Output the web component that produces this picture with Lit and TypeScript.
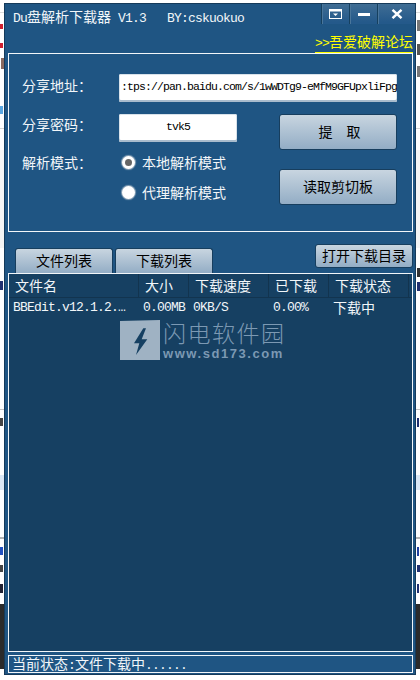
import { customElement } from 'lit/decorators.js';
import { css, html, LitElement } from 'lit';

// bits of the web page that peek out on either side of the window
const slivers = [
  { x: 0, y: 24, w: 3, h: 5, c: '#d02030' },
  { x: 0, y: 43, w: 3, h: 5, c: '#d02030' },
  { x: 1, y: 58, w: 3, h: 11, c: '#8a6a60' },
  { x: 0, y: 106, w: 3, h: 8, c: '#5aa6e0' },
  { x: 0, y: 281, w: 3, h: 9, c: '#203070' },
  { x: 0, y: 418, w: 3, h: 8, c: '#444' },
  { x: 0, y: 547, w: 3, h: 8, c: '#2050c0' },
  { x: 0, y: 565, w: 3, h: 7, c: '#444' },
  { x: 0, y: 584, w: 3, h: 9, c: '#223' },
  { x: 417, y: 20, w: 3, h: 11, c: '#777' },
  { x: 417, y: 44, w: 3, h: 11, c: '#555' },
  { x: 417, y: 66, w: 3, h: 11, c: '#777' },
  { x: 417, y: 268, w: 3, h: 9, c: '#333' },
  { x: 417, y: 282, w: 3, h: 9, c: '#203070' },
  { x: 417, y: 418, w: 2, h: 9, c: '#203070' },
  { x: 417, y: 547, w: 2, h: 9, c: '#2040a0' },
  { x: 417, y: 565, w: 3, h: 7, c: '#203070' },
  { x: 417, y: 584, w: 2, h: 9, c: '#203070' },
];

@customElement('app-root')
export class AppRoot extends LitElement {
  static override styles = css`
    :host {
      display: block;
      position: relative;
      width: 420px;
      height: 680px;
      overflow: hidden;
      box-sizing: border-box;
      padding: 3px 0 0 4px;
      font-family: 'Noto Sans CJK SC', 'Liberation Sans', sans-serif;
      font-size: 14px;
      color: #f2f6f9;
      background:
        linear-gradient(#fff 0 604px, #2b2b2b 604px 669px, #fff 669px),
        #fff;
    }
    * {
      box-sizing: border-box;
    }
    .band {
      position: absolute;
      left: 0;
      width: 420px;
    }
    .b1 { top: 12px; height: 1px; background: #dcdcdc; }
    .b2 { top: 128px; height: 1px; background: #d4d4d4; }
    .b3 { top: 150px; height: 98px; background: #f4f4f4; }
    .b4 { top: 409px; height: 1px; background: #c4c4c4; }
    .b5 { top: 475px; height: 15px; background: #dbe8f6; }
    .b6 { top: 537px; height: 2px; background: #b4b4b4; }
    .sliver {
      position: absolute;
    }
    .window {
      position: relative;
      width: 412px;
      height: 672px;
      display: flex;
      flex-direction: column;
      padding: 0 2px 1px 3px;
      background: #1f5583;
      border: 1px solid #153a5a;
    }
    .mono {
      font-family: 'Liberation Mono', monospace;
      font-size: 13px;
      letter-spacing: -0.8px;
    }
    .titlebar {
      flex: none;
      height: 27px;
      display: flex;
      justify-content: space-between;
      align-items: flex-start;
      margin-right: -2px;
    }
    .title {
      padding: 3px 0 0 5px;
      line-height: 18px;
      white-space: pre;
    }
    .controls {
      display: flex;
      height: 20px;
    }
    .controls div {
      display: flex;
      align-items: center;
      justify-content: center;
      width: 28px;
      border-left: 1px solid #16405f;
      box-shadow: inset 1px 0 0 #4a769b;
      background: linear-gradient(#3f6d94, #24598a 90%);
    }
    .controls div:last-child {
      width: 38px;
    }
    .link-row {
      flex: none;
      height: 22px;
      display: flex;
      justify-content: flex-end;
      align-items: flex-start;
      padding-top: 2px;
    }
    .link {
      color: #ffff00;
      line-height: 17px;
      border-bottom: 1px solid #ffff00;
      white-space: pre;
    }
    .panel {
      flex: none;
      height: 179px;
      border: 1px solid #f2f6f9;
      padding: 20px 15px 0 13px;
    }
    .row {
      display: flex;
      align-items: flex-start;
    }
    .label {
      width: 97px;
      line-height: 22px;
      flex: none;
    }
    .field {
      height: 28px;
      background: #fff;
      border-radius: 2px;
      box-shadow: inset 0 -2px 0 #a9bccd, inset 0 0 0 1px #d8e2ea;
      color: #000;
      font-family: 'Liberation Mono', monospace;
      font-size: 11.5px;
      letter-spacing: -0.9px;
      line-height: 26px;
      white-space: pre;
    }
    .address {
      flex: 1;
      padding-left: 2px;
      overflow: hidden;
    }
    .secret {
      width: 118px;
      text-align: center;
    }
    .lower {
      display: flex;
      justify-content: space-between;
      margin-top: 12px;
    }
    .lower .label {
      margin-top: -1px;
    }
    .mode {
      margin-top: 5px;
    }
    .mode .label {
      margin-top: 4px;
    }
    .radios {
      display: flex;
      flex-direction: column;
    }
    .radio {
      display: flex;
      align-items: center;
      height: 30px;
      gap: 7px;
      padding-left: 3px;
      line-height: 20px;
    }
    .dot {
      width: 13px;
      height: 13px;
      border-radius: 50%;
      background: #fff;
      box-shadow: 0 0 1px 1px #8fa6ba;
      display: flex;
      align-items: center;
      justify-content: center;
    }
    .dot.on::after {
      content: '';
      width: 7px;
      height: 7px;
      border-radius: 50%;
      background: #666;
    }
    .actions {
      display: flex;
      flex-direction: column;
      gap: 19px;
    }
    .btn {
      display: flex;
      align-items: center;
      justify-content: center;
      padding-bottom: 2px;
      color: #000;
      background: linear-gradient(#c8d5e0, #93adc5);
      border: 1px solid #173e5e;
      border-radius: 3px;
      white-space: pre;
    }
    .actions .btn {
      width: 118px;
      height: 36px;
    }
    .actions .fetch {
      padding-left: 3px;
    }
    .tabs {
      flex: none;
      height: 41px;
      display: flex;
      align-items: flex-end;
      padding-left: 7px;
      gap: 2px;
    }
    .tab {
      width: 98px;
      height: 25px;
      border-bottom: none;
      border-radius: 3px 3px 0 0;
    }
    .open {
      width: 98px;
      height: 24px;
      margin: 0 0 5px auto;
    }
    .list {
      flex: 1;
      position: relative;
      background: #164062;
      border: 1px solid #f2f6f9;
    }
    .head,
    .item {
      display: grid;
      grid-template-columns: 130px 50px 80px 60px 80px;
    }
    .head {
      height: 24px;
      line-height: 22px;
      border-bottom: 1px solid #12344f;
    }
    .head span {
      padding-left: 6px;
      border-right: 1px solid #12344f;
    }
    .item {
      line-height: 20px;
    }
    .item span {
      padding-left: 4px;
      white-space: pre;
      overflow: hidden;
    }
    .item .state {
      line-height: 18px;
    }
    .watermark {
      position: absolute;
      left: 111px;
      top: 46px;
      display: flex;
      gap: 3px;
      color: #7c99b3;
    }
    .brand {
      font-size: 23px;
      line-height: 24px;
      letter-spacing: 1.5px;
      font-weight: 300;
      white-space: nowrap;
    }
    .site {
      font: bold 13px/13px 'Liberation Sans', sans-serif;
      letter-spacing: 1.55px;
      margin-top: 3px;
      white-space: nowrap;
    }
    .status {
      flex: none;
      height: 18px;
      margin-top: 3px;
      padding-left: 3px;
      border: 1px solid #f2f6f9;
      line-height: 15px;
      white-space: pre;
    }
  `;

  override render() {
    return html`
      <div class="band b1"></div>
      <div class="band b2"></div>
      <div class="band b3"></div>
      <div class="band b4"></div>
      <div class="band b5"></div>
      <div class="band b6"></div>
      ${slivers.map(
        (s) =>
          html`<div class="sliver" style="left:${s.x}px;top:${s.y}px;width:${s.w}px;height:${s.h}px;background:${s.c}"></div>`
      )}
      <div class="window">
        <div class="titlebar">
          <div class="title"><span class="mono">Du</span>盘解析下载器<span class="mono"> V1.3   BY:cskuokuo</span></div>
          <div class="controls">
            <div>
              <svg width="13" height="10" viewBox="0 0 13 10">
                <rect x="0.5" y="0.5" width="12" height="9" fill="none" stroke="#fff" />
                <rect x="1" y="1" width="11" height="1.5" fill="#fff" />
                <path d="M4 4.5h5L6.5 7z" fill="#fff" />
              </svg>
            </div>
            <div>
              <svg width="12" height="3" viewBox="0 0 12 3"><rect width="12" height="3" fill="#fff" /></svg>
            </div>
            <div>
              <svg width="12" height="10" viewBox="0 0 12 10">
                <path d="M1.5 .8 10.5 9.2M10.5 .8 1.5 9.2" stroke="#fff" stroke-width="2.4" />
              </svg>
            </div>
          </div>
        </div>
        <div class="link-row"><span class="link"><span class="mono">&gt;&gt;</span>吾爱破解论坛</span></div>

        <div class="panel">
          <div class="row">
            <div class="label">分享地址：</div>
            <div class="field address">:tps://pan.baidu.com/s/1wWDTg9-eMfM9GFUpxliFpg</div>
          </div>
          <div class="lower">
            <div>
              <div class="row">
                <div class="label">分享密码：</div>
                <div class="field secret">tvk5</div>
              </div>
              <div class="row mode">
                <div class="label">解析模式：</div>
                <div class="radios">
                  <div class="radio"><span class="dot on"></span>本地解析模式</div>
                  <div class="radio"><span class="dot"></span>代理解析模式</div>
                </div>
              </div>
            </div>
            <div class="actions">
              <div class="btn fetch">提　取</div>
              <div class="btn">读取剪切板</div>
            </div>
          </div>
        </div>

        <div class="tabs">
          <div class="btn tab">文件列表</div>
          <div class="btn tab">下载列表</div>
          <div class="btn open">打开下载目录</div>
        </div>

        <div class="list">
          <div class="head">
            <span>文件名</span><span>大小</span><span>下载速度</span><span>已下载</span><span>下载状态</span>
          </div>
          <div class="item">
            <span class="mono">BBEdit.v12.1.2.…</span>
            <span class="mono">0.00MB</span>
            <span class="mono">0KB/S</span>
            <span class="mono">0.00%</span>
            <span class="state">下载中</span>
          </div>
          <div class="watermark">
            <svg width="40" height="40" viewBox="0 0 40 40">
              <path d="M0 1 40 0V40H0Z" fill="#9fb2c3" />
              <path d="M23.3 8.3 14 23.3h5.3L16 35 27.3 19.3h-5.6L26 8.3Z" fill="#164062" />
            </svg>
            <div>
              <div class="brand">闪电软件园</div>
              <div class="site">www.sd173.com</div>
            </div>
          </div>
        </div>

        <div class="status">当前状态<span class="mono">:</span>文件下载中<span class="mono">......</span></div>
      </div>
    `;
  }
}
